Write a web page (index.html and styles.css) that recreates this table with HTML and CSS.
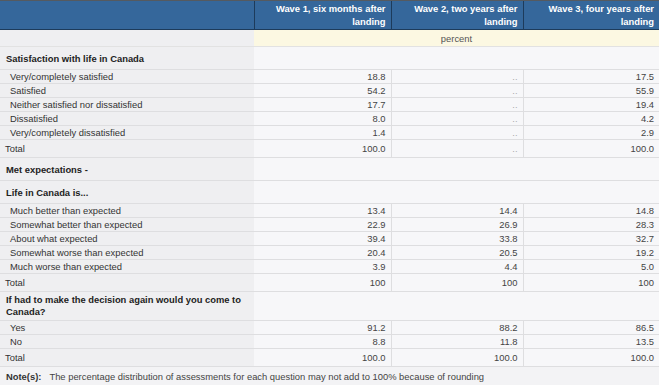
FILE: index.html
```html
<!DOCTYPE html>
<html lang="en">
<head>
<meta charset="utf-8">
<title>Satisfaction and met expectations</title>
<link rel="stylesheet" href="styles.css">
</head>
<body>
<table class="data">
  <colgroup>
    <col class="c-label">
    <col class="c-w1">
    <col class="c-w2">
    <col class="c-w3">
  </colgroup>
  <thead>
    <tr class="head">
      <th class="corner"></th>
      <th>Wave 1, six months after landing</th>
      <th>Wave 2, two years after landing</th>
      <th>Wave 3, four years after landing</th>
    </tr>
    <tr class="unit">
      <td class="lbl"></td>
      <td colspan="3">percent</td>
    </tr>
  </thead>
  <tbody>
    <tr class="section"><th scope="row">Satisfaction with life in Canada</th><td colspan="3"></td></tr>
    <tr class="item"><th scope="row">Very/completely satisfied</th><td>18.8</td><td class="na">..</td><td>17.5</td></tr>
    <tr class="item"><th scope="row">Satisfied</th><td>54.2</td><td class="na">..</td><td>55.9</td></tr>
    <tr class="item"><th scope="row">Neither satisfied nor dissatisfied</th><td>17.7</td><td class="na">..</td><td>19.4</td></tr>
    <tr class="item"><th scope="row">Dissatisfied</th><td>8.0</td><td class="na">..</td><td>4.2</td></tr>
    <tr class="item"><th scope="row">Very/completely dissatisfied</th><td>1.4</td><td class="na">..</td><td>2.9</td></tr>
    <tr class="total"><th scope="row">Total</th><td>100.0</td><td class="na">..</td><td>100.0</td></tr>
    <tr class="section"><th scope="row">Met expectations -</th><td colspan="3"></td></tr>
    <tr class="section"><th scope="row">Life in Canada is...</th><td colspan="3"></td></tr>
    <tr class="item"><th scope="row">Much better than expected</th><td>13.4</td><td>14.4</td><td>14.8</td></tr>
    <tr class="item"><th scope="row">Somewhat better than expected</th><td>22.9</td><td>26.9</td><td>28.3</td></tr>
    <tr class="item"><th scope="row">About what expected</th><td>39.4</td><td>33.8</td><td>32.7</td></tr>
    <tr class="item"><th scope="row">Somewhat worse than expected</th><td>20.4</td><td>20.5</td><td>19.2</td></tr>
    <tr class="item"><th scope="row">Much worse than expected</th><td>3.9</td><td>4.4</td><td>5.0</td></tr>
    <tr class="total"><th scope="row">Total</th><td>100</td><td>100</td><td>100</td></tr>
    <tr class="section two"><th scope="row">If had to make the decision again would you come to<br>Canada?</th><td colspan="3"></td></tr>
    <tr class="item"><th scope="row">Yes</th><td>91.2</td><td>88.2</td><td>86.5</td></tr>
    <tr class="item"><th scope="row">No</th><td>8.8</td><td>11.8</td><td>13.5</td></tr>
    <tr class="total"><th scope="row">Total</th><td>100.0</td><td>100.0</td><td>100.0</td></tr>
  </tbody>
</table>
<p class="note"><strong>Note(s):</strong><span>The percentage distribution of assessments for each question may not add to 100% because of rounding</span></p>
</body>
</html>
```

FILE: styles.css
```css
body {
  margin: 0;
  background: #f3f3f5;
  font-family: "Liberation Sans", Arial, sans-serif;
  font-size: 9.4px;
  color: #333;
}

.data {
  border-collapse: collapse;
  table-layout: fixed;
  width: 659px;
}

.c-label { width: 254px; }
.c-w1 { width: 137px; }
.c-w2 { width: 132px; }
.c-w3 { width: 136px; }

.head th {
  background: #35679b;
  color: #fff;
  font-weight: bold;
  text-align: right;
  vertical-align: top;
  padding: 1px 5px 0;
  line-height: 13px;
  height: 27px;
  border-top: 1px solid #555a60;
  border-bottom: 1px solid #1d3b5b;
  border-left: 1px solid #1d3b5b;
}

.head th.corner {
  border-left: none;
}

.unit td {
  background: #fcf8e2;
  color: #555;
  text-align: center;
  line-height: 11px;
  padding: 3px 5px 2px;
  border-bottom: 1px solid #e2e2e2;
}

.unit td.lbl {
  background: #efeff1;
}

tbody th,
tbody td {
  line-height: 11px;
  padding: 1px 5px;
  border-bottom: 1px solid #dedee0;
}

tbody th {
  background: #efeff1;
  text-align: left;
  font-weight: normal;
  color: #333;
}

tbody td {
  background: #f7f7f9;
  text-align: right;
  color: #444;
}

tbody td + td {
  border-left: 1px solid #dedee0;
}

tbody td.na {
  color: #aaa;
}

.item th {
  padding-left: 10px;
}

.total th,
.total td {
  padding-top: 3px;
  padding-bottom: 3px;
}

.section th {
  font-weight: bold;
  color: #222;
  padding: 6px 6px 5px;
}

.section.two th {
  line-height: 12px;
  padding: 2px 6px 2px;
}

.note {
  margin: 0;
  padding: 4px 6px;
  line-height: 12px;
  color: #444;
}

.note strong {
  color: #333;
  margin-right: 8px;
}
```
